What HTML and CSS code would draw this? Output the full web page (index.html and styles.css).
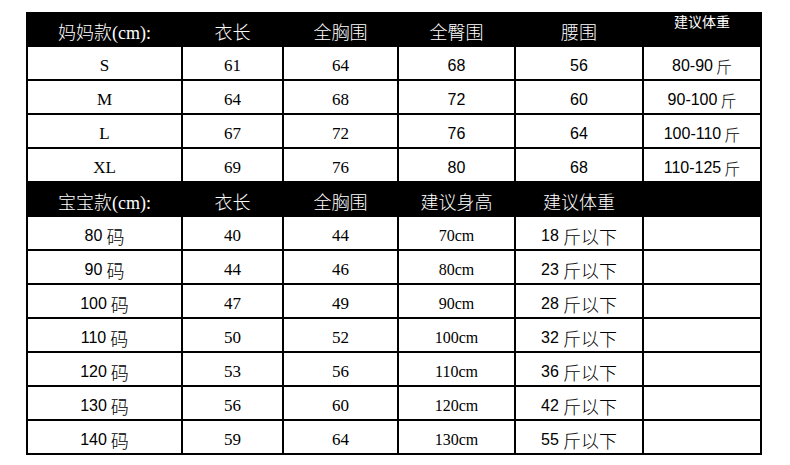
FILE: index.html
```html
<!DOCTYPE html>
<html lang="zh-CN">
<head>
<meta charset="utf-8">
<title>尺码表</title>
<link rel="stylesheet" href="styles.css">
</head>
<body>
<div class="sheet">
  <div class="c h">妈妈款(cm):</div>
  <div class="c h">衣长</div>
  <div class="c h">全胸围</div>
  <div class="c h">全臀围</div>
  <div class="c h">腰围</div>
  <div class="c h hs">建议体重</div>

  <div class="c serif">S</div>
  <div class="c serif">61</div>
  <div class="c serif">64</div>
  <div class="c sans">68</div>
  <div class="c sans">56</div>
  <div class="c sans">80-90 <span class="jin">斤</span></div>

  <div class="c serif">M</div>
  <div class="c serif">64</div>
  <div class="c serif">68</div>
  <div class="c sans">72</div>
  <div class="c sans">60</div>
  <div class="c sans">90-100 <span class="jin">斤</span></div>

  <div class="c serif">L</div>
  <div class="c serif">67</div>
  <div class="c serif">72</div>
  <div class="c sans">76</div>
  <div class="c sans">64</div>
  <div class="c sans">100-110 <span class="jin">斤</span></div>

  <div class="c serif">XL</div>
  <div class="c serif">69</div>
  <div class="c serif">76</div>
  <div class="c sans">80</div>
  <div class="c sans">68</div>
  <div class="c sans">110-125 <span class="jin">斤</span></div>

  <div class="c h">宝宝款(cm):</div>
  <div class="c h">衣长</div>
  <div class="c h">全胸围</div>
  <div class="c h">建议身高</div>
  <div class="c h">建议体重</div>
  <div class="c h"></div>

  <div class="c sans">80 <span class="cj">码</span></div>
  <div class="c serif">40</div>
  <div class="c serif">44</div>
  <div class="c serif cm">70cm</div>
  <div class="c sans">18 <span class="cj">斤以下</span></div>
  <div class="c"></div>

  <div class="c sans">90 <span class="cj">码</span></div>
  <div class="c serif">44</div>
  <div class="c serif">46</div>
  <div class="c serif cm">80cm</div>
  <div class="c sans">23 <span class="cj">斤以下</span></div>
  <div class="c"></div>

  <div class="c sans">100 <span class="cj">码</span></div>
  <div class="c serif">47</div>
  <div class="c serif">49</div>
  <div class="c serif cm">90cm</div>
  <div class="c sans">28 <span class="cj">斤以下</span></div>
  <div class="c"></div>

  <div class="c sans">110 <span class="cj">码</span></div>
  <div class="c serif">50</div>
  <div class="c serif">52</div>
  <div class="c serif cm">100cm</div>
  <div class="c sans">32 <span class="cj">斤以下</span></div>
  <div class="c"></div>

  <div class="c sans">120 <span class="cj">码</span></div>
  <div class="c serif">53</div>
  <div class="c serif">56</div>
  <div class="c serif cm">110cm</div>
  <div class="c sans">36 <span class="cj">斤以下</span></div>
  <div class="c"></div>

  <div class="c sans">130 <span class="cj">码</span></div>
  <div class="c serif">56</div>
  <div class="c serif">60</div>
  <div class="c serif cm">120cm</div>
  <div class="c sans">42 <span class="cj">斤以下</span></div>
  <div class="c"></div>

  <div class="c sans">140 <span class="cj">码</span></div>
  <div class="c serif">59</div>
  <div class="c serif">64</div>
  <div class="c serif cm">130cm</div>
  <div class="c sans">55 <span class="cj">斤以下</span></div>
  <div class="c"></div>
</div>
</body>
</html>
```
FILE: styles.css
```css
html, body {
  margin: 0;
  padding: 0;
  background: #ffffff;
}

body {
  padding: 12px 0 0 26px;
  font-family: "Liberation Serif", "Noto Sans CJK SC", serif;
  color: #000;
}

.sheet {
  display: grid;
  grid-template-columns: 155px 101px 115px 117px 128px 118px;
  grid-auto-rows: 34px;
  width: 736px;
  box-sizing: border-box;
  border-left: 2px solid #000;
  border-top: 1px solid #000;
}

.c {
  box-sizing: border-box;
  border-right: 2px solid #000;
  border-bottom: 2px solid #000;
  display: flex;
  align-items: center;
  justify-content: center;
  padding-top: 5px;
  white-space: nowrap;
  background: #fff;
}

.h {
  background: #000;
  color: #fff;
  font-family: "Liberation Serif", "Noto Sans CJK SC", serif;
  font-weight: 300;
  font-size: 18px;
  padding-top: 3px;
}

.hs {
  font-size: 14px;
  align-items: flex-start;
  padding-top: 1px;
  line-height: 18px;
  font-weight: 400;
}

.serif {
  font-family: "Liberation Serif", "Noto Sans CJK SC", serif;
  font-weight: 400;
  font-size: 17px;
}

.cm {
  font-size: 16px;
}

.sans {
  font-family: "Liberation Sans", "Noto Sans CJK SC", sans-serif;
  font-weight: 400;
  font-size: 16px;
}

.sans .cj {
  font-family: "Noto Sans CJK SC", sans-serif;
  font-weight: 300;
  font-size: 18px;
  margin-left: 4px;
  line-height: 1;
}

.sans .jin {
  font-family: "Noto Sans CJK SC", sans-serif;
  font-weight: 300;
  font-size: 16px;
  margin-left: 3px;
  line-height: 1;
}
```
